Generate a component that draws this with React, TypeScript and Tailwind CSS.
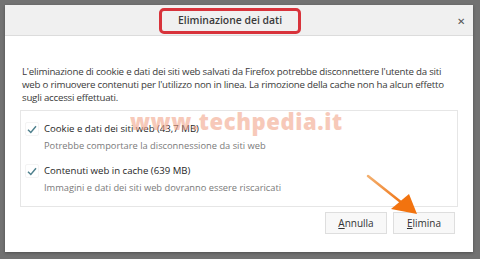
import React from "react";

const font = { fontFamily: '"Open Sans", "Noto Sans", sans-serif' };

function Check() {
  return (
    <div className="flex h-[14px] w-[14px] items-center justify-center rounded-[2px] border border-[#f4f4f4]">
      <svg width="10" height="9" viewBox="0 0 10 9" fill="none">
        <path d="M1 4.8 L3.8 7.5 L9 1.2" stroke="#4d7f8c" strokeWidth="1.4" />
      </svg>
    </div>
  );
}

function Option({ title, desc }: { title: string; desc: string }) {
  return (
    <div className="flex flex-col">
      <div className="flex items-center gap-[5px]">
        <Check />
        <span className="text-[9.6px] leading-[14px] text-[#262626]">{title}</span>
      </div>
      <div className="mt-[3px] pl-[19px] text-[9.3px] leading-[14px] text-[#7a7a7a]">{desc}</div>
    </div>
  );
}

export default function App() {
  return (
    <div className="relative h-[259px] w-[480px] overflow-hidden bg-[#727272] pl-[5px] pt-[5px]" style={font}>
      <div className="flex h-[247px] w-[468px] flex-col bg-white shadow-[0_1px_3px_rgba(0,0,0,0.3)]">
        <div className="relative flex h-[31px] items-center justify-center border-b border-[#dcdcdc] bg-[#f0f0f0]">
          <div className="mr-[18px] mt-[2px] flex h-[26px] w-[142px] items-center justify-center rounded-[5px] border-[3px] border-[#d8333b]">
            <span className="text-[10.4px] font-semibold text-[#3a3a3a]">Eliminazione dei dati</span>
          </div>
          <span className="absolute right-[8px] top-[11px] text-[10px] leading-none text-[#555]">✕</span>
        </div>
        <div className="flex flex-1 flex-col px-[15px] pt-[29px]">
          <p className="whitespace-nowrap px-[2px] text-[9.7px] leading-[13px] tracking-[-0.22px] text-[#3a3a3a]">
            L'eliminazione di cookie e dati dei siti web salvati da Firefox potrebbe disconnettere l'utente da siti
            <br />
            web o rimuovere contenuti per l'utilizzo non in linea. La rimozione della cache non ha alcun effetto
            <br />
            sugli accessi effettuati.
          </p>
          <div className="mt-[6px] flex h-[97px] flex-col gap-[11px] border border-[#e6e6e6] pl-[4px] pt-[11px]">
            <Option title="Cookie e dati dei siti web (43,7 MB)" desc="Potrebbe comportare la disconnessione da siti web" />
            <Option title="Contenuti web in cache (639 MB)" desc="Immagini e dati dei siti web dovranno essere riscaricati" />
          </div>
          <div className="mt-[5px] flex justify-end gap-[6px] pr-[3px]">
            <button className="h-[22px] w-[62px] border border-[#dedede] bg-[#f8f8f8] text-[10px] text-[#333]">
              <span className="underline">A</span>nnulla
            </button>
            <button className="h-[22px] w-[62px] border border-[#dedede] bg-[#f8f8f8] text-[10px] text-[#333]">
              <span className="underline">E</span>limina
            </button>
          </div>
        </div>
      </div>
      <div className="absolute left-[130px] top-[110px] text-[22px] font-extrabold leading-none tracking-[0.6px] text-[#f2a68c] opacity-60">
        www.techpedia.it
      </div>
      <svg className="absolute left-0 top-0" width="480" height="259" viewBox="0 0 480 259">
        <defs>
          <linearGradient id="sh" x1="0" y1="0" x2="1" y2="1">
            <stop offset="0" stopColor="#f3b070" />
            <stop offset="1" stopColor="#f07414" />
          </linearGradient>
        </defs>
        <line x1="368" y1="176" x2="402" y2="203" stroke="url(#sh)" strokeWidth="2.5" strokeLinecap="round" />
        <polygon points="417,214 391,209 409,194" fill="#f2730f" />
      </svg>
    </div>
  );
}
